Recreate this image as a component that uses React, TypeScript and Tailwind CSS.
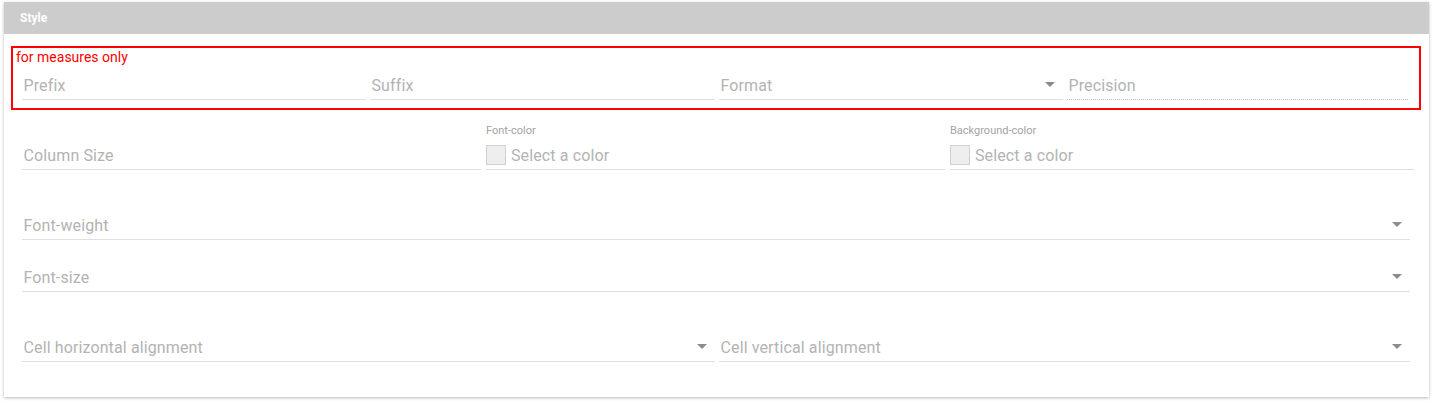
import React from "react";

const Caret = () => (
  <svg width="10" height="5" viewBox="0 0 10 5" className="shrink-0">
    <path d="M0 0 L10 0 L5 5 Z" fill="#8c8c8c" />
  </svg>
);

function Field({
  label,
  select = false,
  dotted = false,
}: {
  label: string;
  select?: boolean;
  dotted?: boolean;
}) {
  return (
    <div
      className={`h-[30px] flex items-center justify-between border-b min-w-0 ${
        dotted ? "border-dotted border-[#bdbdbd]" : "border-[#e0e0e0]"
      }`}
    >
      <span className="pl-[1.5px] pt-[2px] text-[16px] tracking-[0.12px] text-[#b3b3b3] truncate">{label}</span>
      {select && (
        <span className="pr-[8px]">
          <Caret />
        </span>
      )}
    </div>
  );
}

function ColorField({ label }: { label: string }) {
  return (
    <div className="flex flex-col min-w-0">
      <span className="h-[14px] leading-[14px] pt-[1px] text-[11px] text-[#a3a3a3]">{label}</span>
      <div className="mt-[3px] h-[30px] flex items-center gap-[5px] border-b border-[#e0e0e0]">
        <span className="w-[20px] h-[20px] bg-[#eeeeee] border border-[#d0d0d0]" />
        <span className="pt-[2px] text-[16px] tracking-[0.12px] text-[#b3b3b3]">Select a color</span>
      </div>
    </div>
  );
}

export default function App() {
  return (
    <div className="bg-white pt-[2px] pl-[4px] pr-[6px] pb-[6px]" style={{ fontFamily: "Roboto, 'Liberation Sans', sans-serif" }}>
      <div className="bg-white shadow-[0_1px_3px_rgba(0,0,0,0.28)] h-[395px] flex flex-col">
        {/* header */}
        <div className="h-[32px] bg-[#cccccc] flex items-center px-[16px]">
          <span className="text-[12px] font-bold text-white">Style</span>
        </div>

        {/* measures only */}
        <div className="mt-[12px] ml-[7px] mr-[8px] border-2 border-[#ff0000] pt-[1px] pb-[8px]">
          <div className="pl-[3px] text-[14px] leading-[17px] text-[#ff0000]">for measures only</div>
          <div className="mt-[4px] pl-[9px] pr-[11px] grid grid-cols-[344px_345px_344px_1fr] gap-x-[4px]">
            <Field label="Prefix" />
            <Field label="Suffix" />
            <Field label="Format" select />
            <Field label="Precision" dotted />
          </div>
        </div>

        {/* column size / colors */}
        <div className="mt-[13px] pl-[18px] pr-[15px] grid grid-cols-[459px_459px_1fr] gap-x-[5px] items-end">
          <Field label="Column Size" />
          <ColorField label="Font-color" />
          <ColorField label="Background-color" />
        </div>

        <div className="mt-[40px] pl-[18px] pr-[19px]">
          <Field label="Font-weight" select />
        </div>

        <div className="mt-[22px] pl-[18px] pr-[19px]">
          <Field label="Font-size" select />
        </div>

        <div className="mt-[40px] pl-[18px] pr-[19px] grid grid-cols-[693px_1fr] gap-x-[4px]">
          <Field label="Cell horizontal alignment" select />
          <Field label="Cell vertical alignment" select />
        </div>
      </div>
    </div>
  );
}
